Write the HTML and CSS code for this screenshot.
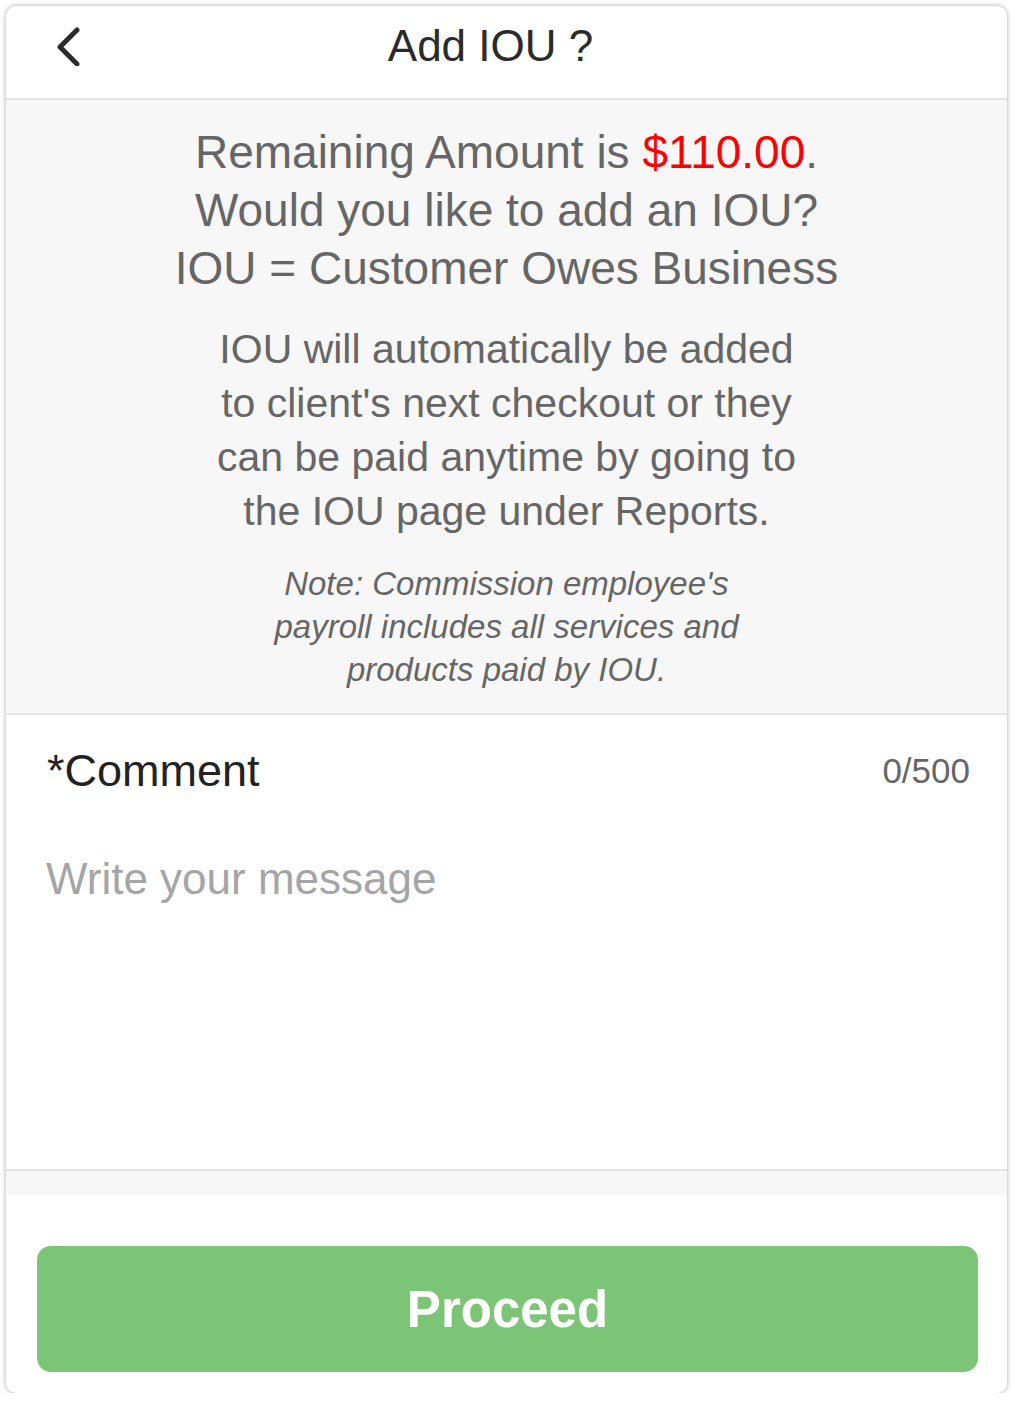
FILE: index.html
```html
<!DOCTYPE html>
<html lang="en">
<head>
    <meta charset="UTF-8">
    <meta name="viewport" content="width=device-width, initial-scale=1.0">
    <title>Add IOU ?</title>
    <link rel="stylesheet" href="styles.css">
</head>
<body>

    <div class="sheet">
        <div class="header">
            <button class="back" aria-label="Back">
                <svg width="28" height="40" viewBox="0 0 28 40">
                    <polyline points="22,4 5,21 22,38" fill="none" stroke="#2b2b2b" stroke-width="5" stroke-linecap="round" stroke-linejoin="round"/>
                </svg>
            </button>
            <div class="title">Add IOU ?</div>
            <div class="spacer"></div>
        </div>

        <div class="info">
            <p class="lead">
                Remaining Amount is <span class="amount">$110.00</span>.<br>
                Would you like to add an IOU?<br>
                IOU = Customer Owes Business
            </p>
            <p class="detail">
                IOU will automatically be added<br>
                to client's next checkout or they<br>
                can be paid anytime by going to<br>
                the IOU page under Reports.
            </p>
            <p class="note">
                Note: Commission employee's<br>
                payroll includes all services and<br>
                products paid by IOU.
            </p>
        </div>

        <div class="comment">
            <div class="comment-head">
                <span class="label">*Comment</span>
                <span class="count" id="count">0/500</span>
            </div>
            <textarea class="message" id="message" maxlength="500" placeholder="Write your message"></textarea>
        </div>

        <div class="strip"></div>

        <div class="footer">
            <button class="proceed">Proceed</button>
        </div>
    </div>

    <script>
        let message = document.getElementById('message');
        let count = document.getElementById('count');

        message.addEventListener('input', function () {
            count.textContent = message.value.length + '/500';
        });
    </script>

</body>
</html>
```

FILE: styles.css
```css
body {
    font-family: "Liberation Sans", Arial, sans-serif;
    margin: 0;
    padding: 6px 8px 0 6px;
    background-color: #fff;
}
.sheet {
    background-color: #fff;
    border-radius: 10px;
    box-shadow: 0px 0px 5px rgba(0, 0, 0, 0.35);
    overflow: hidden;
}
.header {
    display: flex;
    align-items: center;
    height: 92px;
    border-bottom: 2px solid #e4e4e4;
}
.back {
    width: 100px;
    height: 80px;
    padding: 0 0 10px 49px;
    border: none;
    background: none;
    text-align: left;
    cursor: pointer;
}
.title {
    flex: 1;
    text-align: center;
    font-size: 44px;
    color: #2b2b2b;
    padding-bottom: 12px;
}
.spacer {
    width: 132px;
}
.info {
    height: 615px;
    box-sizing: border-box;
    padding: 23px 20px 0;
    background-color: #f7f7f7;
    border-bottom: 2px solid #e4e4e4;
    text-align: center;
    color: #666;
}
.info p {
    margin: 0;
}
.lead {
    font-size: 46px;
    line-height: 58px;
}
.amount {
    color: #f00;
}
.detail {
    font-size: 41px;
    line-height: 54px;
    padding-top: 25px;
}
.note {
    font-size: 33px;
    line-height: 43px;
    font-style: italic;
    padding-top: 24px;
}
.comment {
    height: 456px;
    box-sizing: border-box;
    display: flex;
    flex-direction: column;
    border-bottom: 2px solid #e4e4e4;
}
.comment-head {
    display: flex;
    justify-content: space-between;
    align-items: center;
    padding: 31px 37px 0 41px;
    height: 50px;
}
.label {
    font-size: 45px;
    color: #222;
}
.count {
    font-size: 35px;
    color: #666;
}
.message {
    flex: 1;
    margin-top: 52px;
    padding: 6px 40px;
    border: none;
    outline: none;
    resize: none;
    background: none;
    font-family: "Liberation Sans", Arial, sans-serif;
    font-size: 44px;
    color: #333;
}
.message::placeholder {
    color: #a5a5a8;
}
.strip {
    height: 24px;
    background-color: #f7f7f7;
}
.footer {
    padding: 51px 29px 21px 31px;
}
.proceed {
    display: block;
    width: 100%;
    height: 126px;
    border: none;
    border-radius: 14px;
    background-color: #7cc576;
    color: #fff;
    font-family: "Liberation Sans", Arial, sans-serif;
    font-size: 51px;
    font-weight: bold;
    cursor: pointer;
}
```
